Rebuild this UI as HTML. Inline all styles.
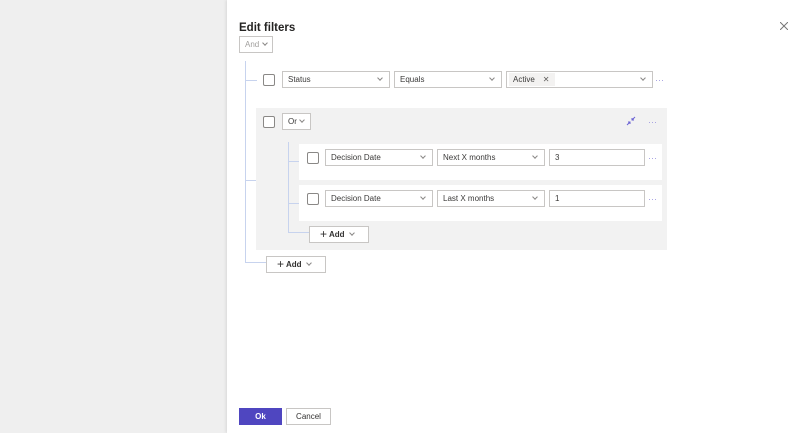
<!DOCTYPE html>
<html><head><style>
*{box-sizing:border-box;margin:0;padding:0}
body{width:800px;height:433px;overflow:hidden;background:#efefef;font-family:"Liberation Sans",sans-serif;position:relative;font-size:8px;color:#323130}
.panel{position:absolute;left:227px;top:0;width:573px;height:433px;background:#fff;box-shadow:-1px 0 3px rgba(0,0,0,.1)}
.a{position:absolute}
.dd{position:absolute;height:17px;border:1px solid #c8c6c4;background:#fff;padding-left:5px;line-height:15px;font-size:8px;color:#3b3a39;white-space:nowrap}
.cv{position:absolute;right:7px;top:4px;width:4px;height:4px;border-right:1px solid #8a8886;border-bottom:1px solid #8a8886;transform:rotate(45deg)}
.cb{position:absolute;width:12px;height:12px;border:1px solid #8a8886;border-radius:2px;background:#fff}
.dots{position:absolute;font-size:9px;color:#9e99e0;line-height:8px}
.ln{position:absolute;background:#c7d3ee}
.card{position:absolute;background:#fff}
.btn{position:absolute;height:17px;border:1px solid #c8c6c4;background:#fff;font-size:8px;line-height:15px;font-weight:bold;white-space:nowrap}
.sc{display:inline-block;width:4px;height:4px;border-right:1px solid #8a8886;border-bottom:1px solid #8a8886;transform:rotate(45deg);margin-left:5px;vertical-align:2px}
</style></head><body>
<div class="panel"></div>
<div class="a" style="left:239px;top:22px;font-size:11.5px;font-weight:bold;color:#252423">Edit filters</div>
<div class="dd" style="left:239px;top:36px;width:34px;color:#a19f9d">And<span class="cv" style="right:5px"></span></div>
<svg class="a" style="left:780px;top:22px" width="8" height="8"><path d="M0 0L8 8M8 0L0 8" stroke="#777" stroke-width="1"/></svg>

<div class="ln" style="left:245px;top:61px;width:1px;height:202px"></div>
<div class="ln" style="left:245px;top:80px;width:12px;height:1px"></div>
<div class="ln" style="left:245px;top:180px;width:12px;height:1px"></div>
<div class="ln" style="left:245px;top:262px;width:21px;height:1px"></div>

<div class="cb" style="left:263px;top:74px"></div>
<div class="dd" style="left:282px;top:71px;width:108px">Status<span class="cv"></span></div>
<div class="dd" style="left:394px;top:71px;width:108px">Equals<span class="cv"></span></div>
<div class="dd" style="left:506px;top:71px;width:147px;padding-left:2px;padding-top:1px"><span style="display:inline-block;background:#f3f2f1;height:13px;line-height:13px;padding:0 4px;width:46px;vertical-align:top">Active<span style="margin-left:8px;color:#605e5c">✕</span></span><span class="cv"></span></div>
<div class="dots" style="left:655px;top:76px">···</div>

<div class="a" style="left:256px;top:108px;width:411px;height:142px;background:#f2f2f2"></div>
<div class="cb" style="left:263px;top:116px"></div>
<div class="dd" style="left:282px;top:113px;width:29px">Or<span class="cv" style="right:6px"></span></div>
<svg class="a" style="left:626px;top:116px" width="10" height="10" viewBox="0 0 10 10"><path d="M9 1L6 4M6 2v2h2M1 9l3-3M2 6h2v2" stroke="#6b63d4" stroke-width="1" fill="none"/></svg>
<div class="dots" style="left:648px;top:118px">···</div>

<div class="ln" style="left:288px;top:142px;width:1px;height:91px"></div>
<div class="ln" style="left:288px;top:161px;width:11px;height:1px"></div>
<div class="ln" style="left:288px;top:203px;width:11px;height:1px"></div>
<div class="ln" style="left:288px;top:232px;width:21px;height:1px"></div>

<div class="card" style="left:299px;top:144px;width:363px;height:36px"></div>
<div class="card" style="left:299px;top:185px;width:363px;height:36px"></div>
<div class="cb" style="left:307px;top:152px"></div>
<div class="dd" style="left:325px;top:149px;width:108px">Decision Date<span class="cv"></span></div>
<div class="dd" style="left:437px;top:149px;width:108px">Next X months<span class="cv"></span></div>
<div class="dd" style="left:549px;top:149px;width:96px">3</div>
<div class="dots" style="left:648px;top:154px">···</div>
<div class="cb" style="left:307px;top:193px"></div>
<div class="dd" style="left:325px;top:190px;width:108px">Decision Date<span class="cv"></span></div>
<div class="dd" style="left:437px;top:190px;width:108px">Last X months<span class="cv"></span></div>
<div class="dd" style="left:549px;top:190px;width:96px">1</div>
<div class="dots" style="left:648px;top:195px">···</div>

<div class="btn" style="left:309px;top:226px;width:60px;padding-left:10px"><span style="font-size:12px;font-weight:normal;vertical-align:-1px">+</span> Add<span class="sc"></span></div>
<div class="btn" style="left:266px;top:256px;width:60px;padding-left:10px"><span style="font-size:12px;font-weight:normal;vertical-align:-1px">+</span> Add<span class="sc"></span></div>

<div class="btn" style="left:239px;top:408px;width:43px;background:#4f46c0;border-color:#4f46c0;color:#fff;text-align:center">Ok</div>
<div class="btn" style="left:286px;top:408px;width:45px;text-align:center;font-weight:normal">Cancel</div>
</body></html>
